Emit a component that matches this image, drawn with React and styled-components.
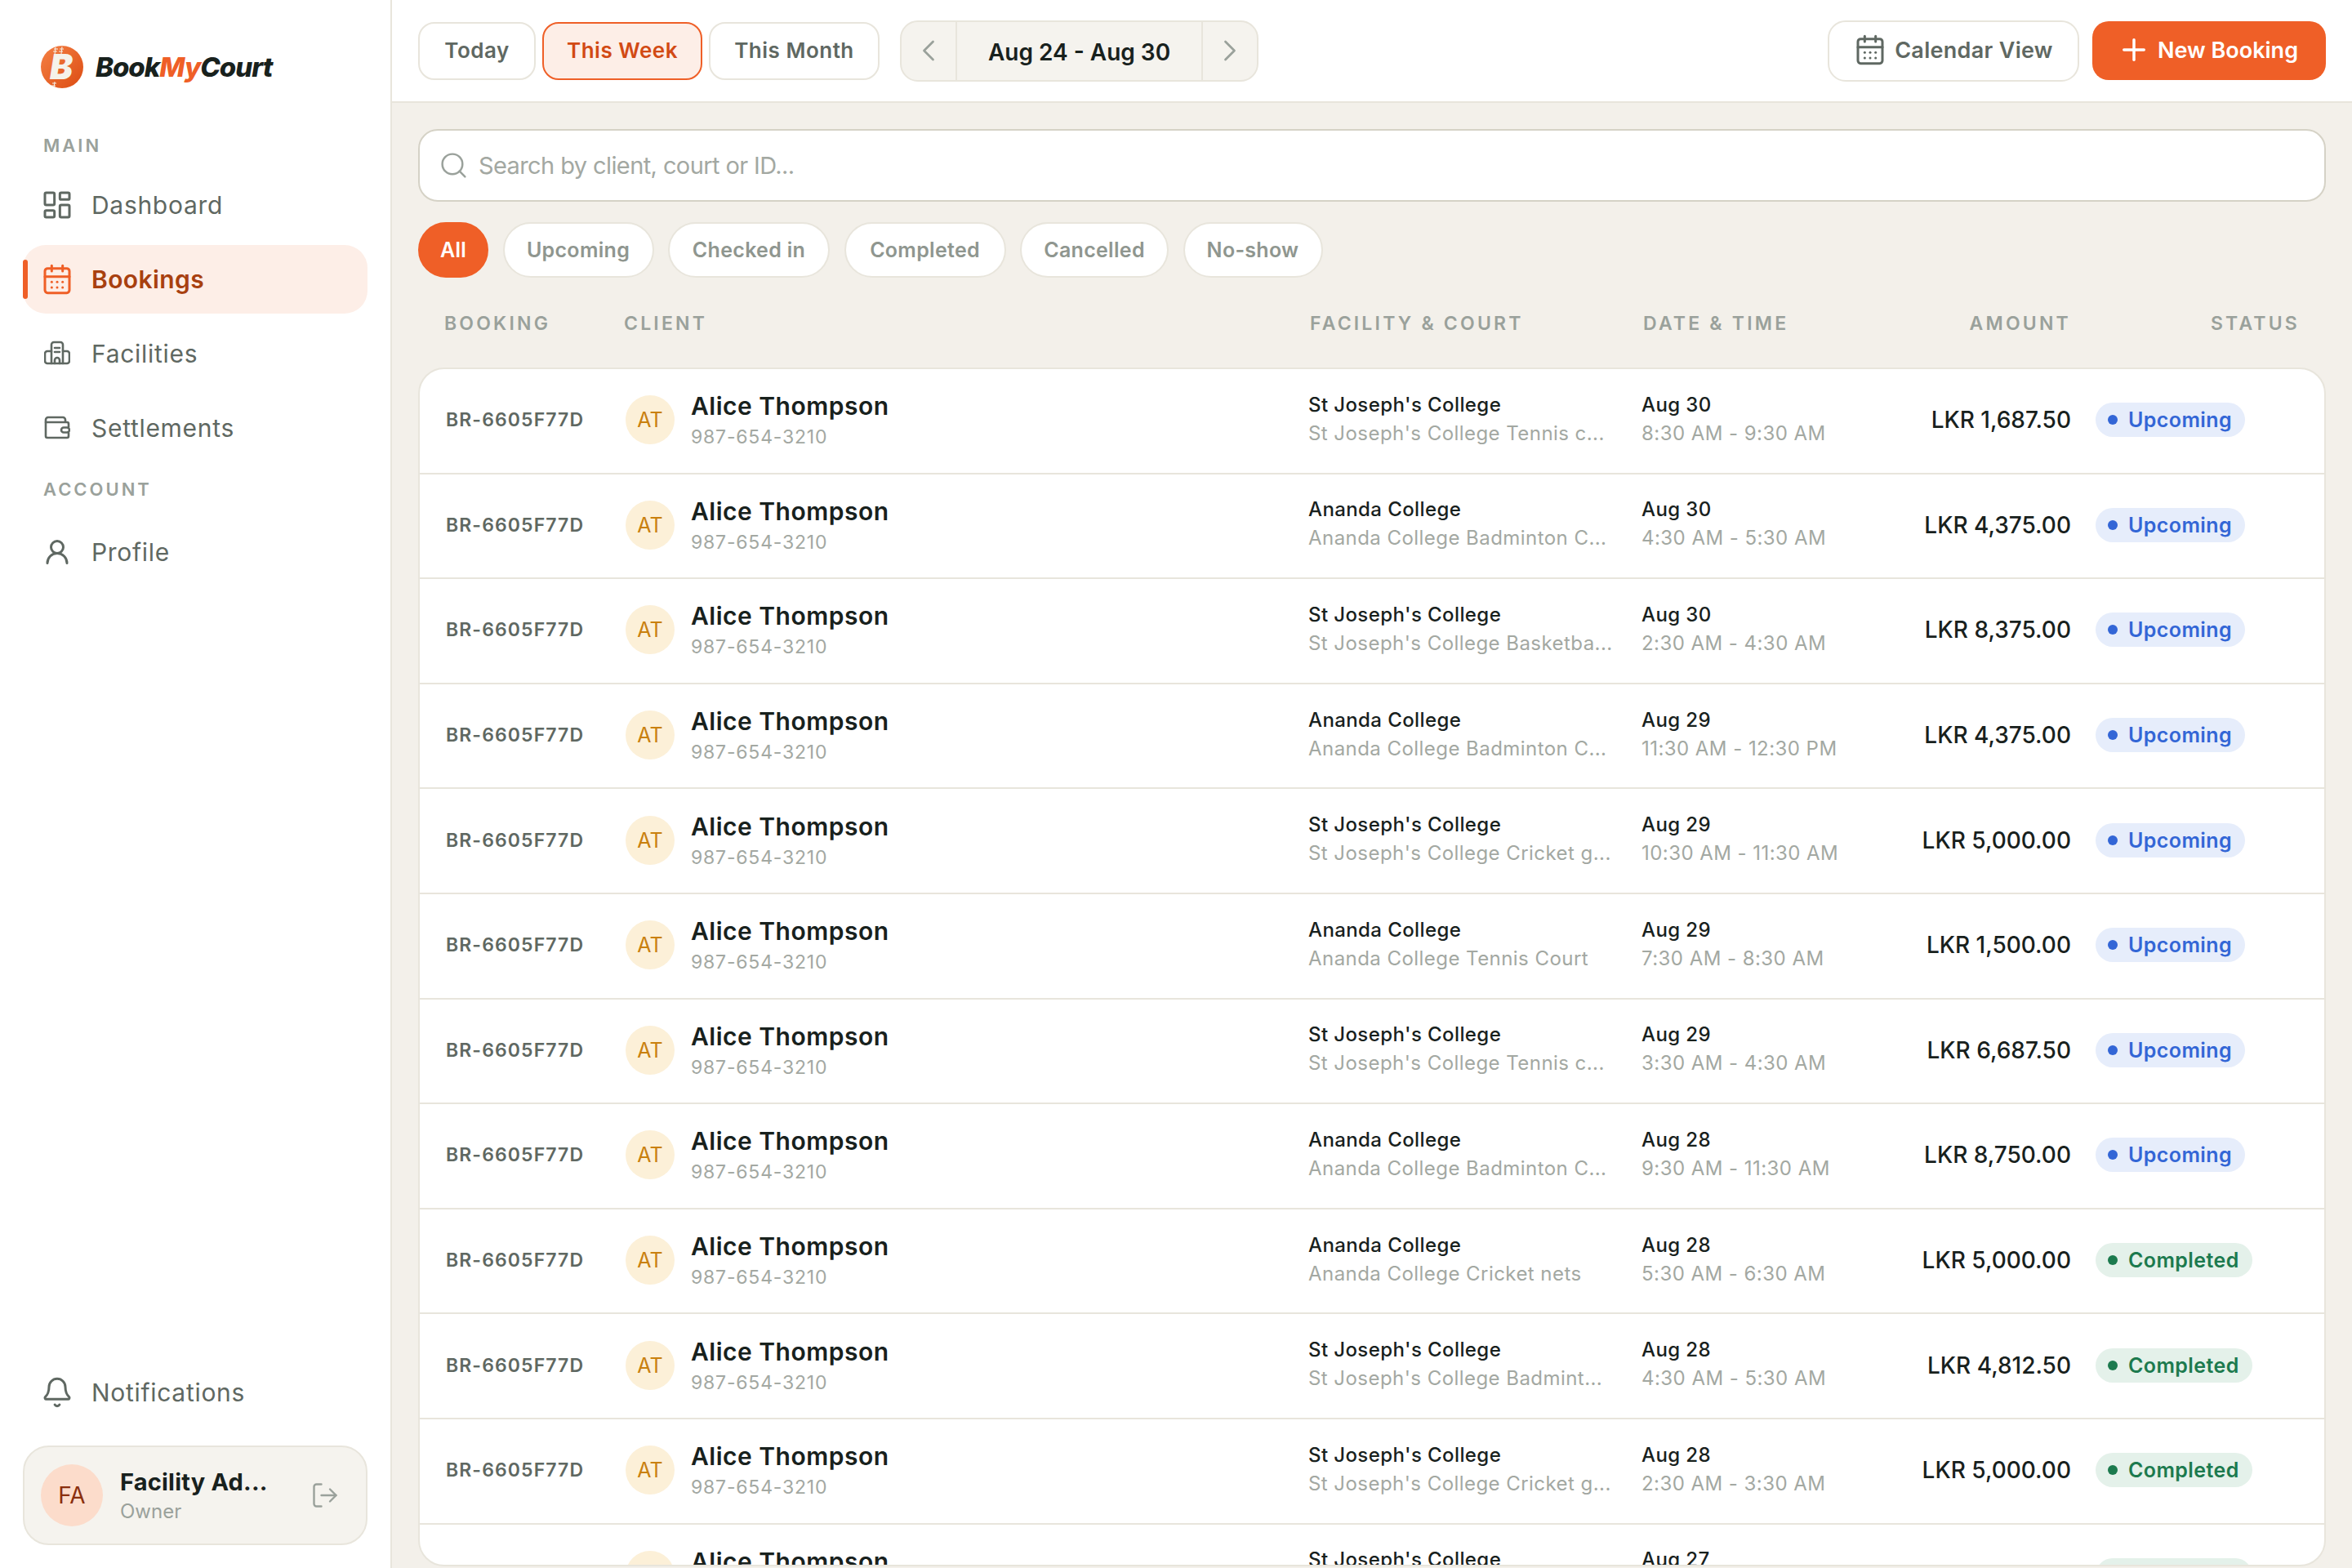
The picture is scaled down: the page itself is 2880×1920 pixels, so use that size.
import React from 'react';
import styled, { createGlobalStyle, css } from 'styled-components';
import {
  Bell,
  CalendarDays,
  ChevronLeft,
  ChevronRight,
  LayoutDashboard,
  LogOut,
  Plus,
  Search,
  UserRound,
} from 'lucide-react';

const GlobalStyle = createGlobalStyle`
  html, body, #root {
    margin: 0;
    height: 100%;
  }
  body {
    font-family: Inter, "Liberation Sans", sans-serif;
    background: #f3f0ea;
    color: #18211d;
  }
  * {
    box-sizing: border-box;
  }
`;

const Page = styled.div`
  display: flex;
  width: 2880px;
  height: 1920px;
  overflow: hidden;
`;

const Sidebar = styled.aside`
  display: flex;
  flex-direction: column;
  flex: 0 0 480px;
  padding: 56px 28px 28px;
  background: #fff;
  border-right: 2px solid #e8e5dc;
`;

const Logo = styled.div`
  display: flex;
  align-items: center;
  gap: 15px;
  height: 52px;
  padding-left: 22px;
`;

const LogoText = styled.div`
  font-size: 33px;
  font-weight: 800;
  font-style: italic;
  letter-spacing: -1px;
  color: #18211d;
  span {
    color: #ef5f27;
  }
`;

const SectionLabel = styled.div`
  margin: ${(props) => props.$top}px 0 ${(props) => props.$bottom}px 25px;
  font-size: 22px;
  line-height: 28px;
  font-weight: 600;
  letter-spacing: 3px;
  color: #9aa19b;
`;

const NavItem = styled.div`
  position: relative;
  display: flex;
  align-items: center;
  gap: 22px;
  height: 84px;
  margin-bottom: ${(props) => props.$gap ?? 7}px;
  padding-left: 22px;
  border-radius: 28px;
  font-size: 30px;
  letter-spacing: 0.7px;
  color: #5f6862;
  ${(props) =>
    props.$active &&
    css`
      background: #fdeee7;
      color: #a8400f;
      font-weight: 600;
      letter-spacing: 0.4px;
      svg {
        color: #ef5f27;
      }
      &::before {
        content: '';
        position: absolute;
        left: 0;
        top: 18px;
        width: 6px;
        height: 48px;
        border-radius: 3px;
        background: #ef5f27;
      }
    `}
`;

const IconSlot = styled.span`
  display: flex;
  align-items: center;
  justify-content: center;
  flex: 0 0 40px;
  height: 40px;
`;

const Spacer = styled.div`
  flex: 1;
`;

const UserCard = styled.div`
  display: flex;
  align-items: center;
  height: 122px;
  padding: 0 32px 0 20px;
  background: #f5f3ee;
  border: 2px solid #e8e5dc;
  border-radius: 32px;
`;

const UserAvatar = styled.div`
  display: flex;
  align-items: center;
  justify-content: center;
  flex: 0 0 76px;
  height: 76px;
  border-radius: 50%;
  background: #fcdccb;
  color: #8a2f0e;
  font-size: 28px;
`;

const UserInfo = styled.div`
  flex: 1;
  margin-left: 21px;
`;

const UserName = styled.div`
  font-size: 29px;
  line-height: 38px;
  font-weight: 700;
  letter-spacing: 0.2px;
  color: #18211d;
`;

const UserRole = styled.div`
  margin-top: 2px;
  font-size: 24px;
  line-height: 30px;
  color: #9aa19b;
`;

const Main = styled.main`
  display: flex;
  flex-direction: column;
  flex: 1;
  min-width: 0;
`;

const TopBar = styled.header`
  display: flex;
  align-items: center;
  flex: 0 0 126px;
  padding: 0 32px;
  background: #fff;
  border-bottom: 2px solid #e8e5dc;
`;

const RangeButtons = styled.div`
  display: flex;
  gap: 8px;
  margin-right: 25px;
`;

const RangeButton = styled.div`
  display: flex;
  align-items: center;
  justify-content: center;
  width: ${(props) => props.$width}px;
  height: 71px;
  padding-bottom: 2px;
  background: ${(props) => (props.$active ? '#fdeee7' : '#fff')};
  border: 2px solid ${(props) => (props.$active ? '#ef5f27' : '#e8e5dc')};
  border-radius: 20px;
  font-size: 26px;
  font-weight: 600;
  letter-spacing: 0.5px;
  color: ${(props) => (props.$active ? '#d24a14' : '#5f6862')};
`;

const DateNav = styled.div`
  display: flex;
  align-items: stretch;
  width: 439px;
  height: 75px;
  background: #f5f3ee;
  border: 2px solid #e8e5dc;
  border-radius: 22px;
`;

const DateArrow = styled.div`
  display: flex;
  align-items: center;
  justify-content: center;
  flex: 0 0 66px;
  color: #9aa19b;
`;

const DateLabel = styled.div`
  display: flex;
  align-items: center;
  justify-content: center;
  flex: 1;
  padding-top: 3px;
  border-left: 2px solid #e8e5dc;
  border-right: 2px solid #e8e5dc;
  font-size: 28px;
  font-weight: 600;
  color: #18211d;
`;

const Actions = styled.div`
  display: flex;
  align-items: center;
  gap: 16px;
  margin-left: auto;
`;

const ViewButton = styled.div`
  display: flex;
  align-items: center;
  justify-content: center;
  gap: 10px;
  width: 308px;
  height: 75px;
  padding-bottom: 2px;
  background: #fff;
  border: 2px solid #e8e5dc;
  border-radius: 22px;
  font-size: 27px;
  font-weight: 600;
  letter-spacing: 0.3px;
  color: #5f6862;
`;

const NewButton = styled.div`
  display: flex;
  align-items: center;
  justify-content: center;
  gap: 8px;
  width: 286px;
  height: 72px;
  padding: 0 4px 2px 0;
  background: #ef5f27;
  border-radius: 20px;
  font-size: 27px;
  font-weight: 600;
  color: #fff;
`;

const Content = styled.div`
  display: flex;
  flex-direction: column;
  flex: 1;
  min-height: 0;
  padding: 32px 32px 2px;
`;

const SearchBox = styled.label`
  display: flex;
  align-items: center;
  gap: 12px;
  flex: 0 0 89px;
  padding: 0 23px;
  background: #fff;
  border: 2px solid #d5d2c6;
  border-radius: 24px;
  color: #9aa19b;
`;

const SearchInput = styled.input`
  flex: 1;
  border: 0;
  outline: 0;
  background: none;
  padding: 0;
  font-family: inherit;
  font-size: 29px;
  letter-spacing: -0.6px;
  &::placeholder {
    color: #a3a8a2;
    opacity: 1;
  }
`;

const Chips = styled.div`
  display: flex;
  gap: 17.5px;
  margin-top: 25px;
`;

const Chip = styled.div`
  display: flex;
  align-items: center;
  justify-content: center;
  width: ${(props) => props.$width}px;
  height: 68px;
  background: ${(props) => (props.$active ? '#ef5f27' : '#fff')};
  border: 2px solid ${(props) => (props.$active ? '#ef5f27' : '#e8e5dc')};
  border-radius: 34px;
  font-size: 25px;
  font-weight: 600;
  letter-spacing: 0.3px;
  color: ${(props) => (props.$active ? '#fff' : '#8f968f')};
`;

const HeadRow = styled.div`
  display: grid;
  grid-template-columns: 220px 840px 408px 260px 264px 1fr;
  align-items: center;
  flex: 0 0 110px;
  padding: 2px 32px 0;
  font-size: 23px;
  font-weight: 600;
  letter-spacing: 3.2px;
  color: #9aa19b;
`;

const HeadEnd = styled.div`
  text-align: right;
`;

const Card = styled.div`
  flex: 1;
  min-height: 0;
  overflow: hidden;
  background: #fff;
  border: 2px solid #e8e5dc;
  border-radius: 32px;
`;

const Row = styled.div`
  display: grid;
  grid-template-columns: 220px 836px 408px 260px 266px 1fr;
  align-items: center;
  height: 128.6px;
  padding: 0 32px 2px;
  border-bottom: 2px solid #e8e5dc;
`;

const BookingId = styled.div`
  font-size: 23px;
  font-weight: 600;
  letter-spacing: 1.1px;
  color: #5f6862;
`;

const Client = styled.div`
  display: flex;
  align-items: center;
  gap: 20px;
`;

const ClientAvatar = styled.div`
  display: flex;
  align-items: center;
  justify-content: center;
  flex: 0 0 60px;
  height: 60px;
  border-radius: 50%;
  background: #fcf0d8;
  color: #c9800f;
  font-size: 25px;
`;

const ClientName = styled.div`
  font-size: 30px;
  line-height: 38px;
  font-weight: 600;
  letter-spacing: 0.5px;
  color: #18211d;
`;

const ClientPhone = styled.div`
  margin-top: 4px;
  font-size: 23px;
  line-height: 30px;
  letter-spacing: 0.8px;
  color: #a3a8a2;
`;

const Stack = styled.div`
  padding-bottom: 2px;
`;

const Title = styled.div`
  font-size: 24px;
  line-height: 32px;
  font-weight: 500;
  letter-spacing: 0.4px;
  color: #18211d;
`;

const Sub = styled.div`
  margin-top: 3px;
  font-size: 24px;
  line-height: 32px;
  letter-spacing: 0.45px;
  color: #a3a8a2;
`;

const Amount = styled.div`
  text-align: right;
  font-size: 28px;
  font-weight: 500;
  color: #18211d;
`;

const Badge = styled.div`
  display: inline-flex;
  align-items: center;
  gap: 13px;
  justify-self: start;
  height: 42px;
  margin-left: 30px;
  padding: 0 16px 0 15px;
  border-radius: 21px;
  background: ${(props) => (props.$done ? '#e4f1ea' : '#e6edfb')};
  color: ${(props) => (props.$done ? '#1c7a4e' : '#3366d6')};
  font-size: 25px;
  font-weight: 600;
  letter-spacing: 0.4px;
  &::before {
    content: '';
    width: 12px;
    height: 12px;
    border-radius: 50%;
    background: currentColor;
  }
`;

const BuildingIcon = () => (
  <svg width="32" height="32" viewBox="0 0 32 32" fill="none" stroke="currentColor" strokeWidth="2.6" strokeLinecap="round" strokeLinejoin="round">
    <path d="M9 28V5a3 3 0 0 1 3-3h8a3 3 0 0 1 3 3v23" />
    <path d="M9 13H4a3 3 0 0 0-3 3v9a3 3 0 0 0 3 3h24a3 3 0 0 0 3-3v-9a3 3 0 0 0-3-3h-5" />
    <path d="M13 9h6M13 14h6M13 28v-4a3 3 0 0 1 6 0v4" />
  </svg>
);

const WalletIcon = () => (
  <svg width="32" height="32" viewBox="0 0 32 32" fill="none" stroke="currentColor" strokeWidth="2.6" strokeLinecap="round" strokeLinejoin="round">
    <path d="M2 9v17a2 2 0 0 0 2 2h24a2 2 0 0 0 2-2v-4" />
    <path d="M30 15v-4a2 2 0 0 0-2-2H2V6a3 3 0 0 1 3-3h18a3 3 0 0 1 3 3v3" />
    <rect x="21" y="15.5" width="10" height="6" rx="3" />
  </svg>
);

const LogoMark = () => (
  <svg width="52" height="52" viewBox="0 0 52 52">
    <defs>
      <linearGradient id="ball" x1="0" y1="0" x2="1" y2="1">
        <stop offset="0" stopColor="#f58145" />
        <stop offset="1" stopColor="#dc4c12" />
      </linearGradient>
    </defs>
    <circle cx="26" cy="26" r="26" fill="url(#ball)" />
    <text x="25" y="41" textAnchor="middle" fontFamily="Inter, sans-serif" fontSize="42" fontWeight="900" fontStyle="italic" fill="#f5f2ea">B</text>
    <path d="M18 2l-1 9M26 1l-1 9M16 4h5M15 7h5M23 4h5M22 7h5M17 44l-1 7M14 46h5M13 49h5" stroke="#f5f2ea" strokeWidth="1" fill="none" />
  </svg>
);

const rows = [
  ["St Joseph's College", "St Joseph's College Tennis c...", 'Aug 30', '8:30 AM - 9:30 AM', 'LKR 1,687.50', 'Upcoming'],
  ['Ananda College', 'Ananda College Badminton C...', 'Aug 30', '4:30 AM - 5:30 AM', 'LKR 4,375.00', 'Upcoming'],
  ["St Joseph's College", "St Joseph's College Basketba...", 'Aug 30', '2:30 AM - 4:30 AM', 'LKR 8,375.00', 'Upcoming'],
  ['Ananda College', 'Ananda College Badminton C...', 'Aug 29', '11:30 AM - 12:30 PM', 'LKR 4,375.00', 'Upcoming'],
  ["St Joseph's College", "St Joseph's College Cricket g...", 'Aug 29', '10:30 AM - 11:30 AM', 'LKR 5,000.00', 'Upcoming'],
  ['Ananda College', 'Ananda College Tennis Court', 'Aug 29', '7:30 AM - 8:30 AM', 'LKR 1,500.00', 'Upcoming'],
  ["St Joseph's College", "St Joseph's College Tennis c...", 'Aug 29', '3:30 AM - 4:30 AM', 'LKR 6,687.50', 'Upcoming'],
  ['Ananda College', 'Ananda College Badminton C...', 'Aug 28', '9:30 AM - 11:30 AM', 'LKR 8,750.00', 'Upcoming'],
  ['Ananda College', 'Ananda College Cricket nets', 'Aug 28', '5:30 AM - 6:30 AM', 'LKR 5,000.00', 'Completed'],
  ["St Joseph's College", "St Joseph's College Badmint...", 'Aug 28', '4:30 AM - 5:30 AM', 'LKR 4,812.50', 'Completed'],
  ["St Joseph's College", "St Joseph's College Cricket g...", 'Aug 28', '2:30 AM - 3:30 AM', 'LKR 5,000.00', 'Completed'],
  ["St Joseph's College", "St Joseph's College Tennis c...", 'Aug 27', '1:30 AM - 2:30 AM', 'LKR 5,000.00', 'Completed'],
];

const chips = [
  ['All', 86],
  ['Upcoming', 185],
  ['Checked in', 198],
  ['Completed', 198],
  ['Cancelled', 182],
  ['No-show', 171],
];

const iconProps = { size: 40, strokeWidth: 1.8 };

const App = () => (
  <Page>
    <GlobalStyle />
    <Sidebar>
      <Logo>
        <LogoMark />
        <LogoText>
          Book<span>My</span>Court
        </LogoText>
      </Logo>
      <SectionLabel $top={56} $bottom={17}>MAIN</SectionLabel>
      <NavItem>
        <IconSlot>
          <LayoutDashboard {...iconProps} />
        </IconSlot>
        Dashboard
      </NavItem>
      <NavItem $active>
        <IconSlot>
          <CalendarDays {...iconProps} />
        </IconSlot>
        Bookings
      </NavItem>
      <NavItem>
        <IconSlot>
          <BuildingIcon />
        </IconSlot>
        Facilities
      </NavItem>
      <NavItem>
        <IconSlot>
          <WalletIcon />
        </IconSlot>
        Settlements
      </NavItem>
      <SectionLabel $top={12} $bottom={21}>ACCOUNT</SectionLabel>
      <NavItem>
        <IconSlot>
          <UserRound size={36} strokeWidth={2} />
        </IconSlot>
        Profile
      </NavItem>
      <Spacer />
      <NavItem $gap={23}>
        <IconSlot>
          <Bell {...iconProps} />
        </IconSlot>
        Notifications
      </NavItem>
      <UserCard>
        <UserAvatar>FA</UserAvatar>
        <UserInfo>
          <UserName>Facility Ad...</UserName>
          <UserRole>Owner</UserRole>
        </UserInfo>
        <LogOut size={36} strokeWidth={1.6} color="#9aa19b" />
      </UserCard>
    </Sidebar>
    <Main>
      <TopBar>
        <RangeButtons>
          <RangeButton $width={144}>Today</RangeButton>
          <RangeButton $width={196} $active>This Week</RangeButton>
          <RangeButton $width={209}>This Month</RangeButton>
        </RangeButtons>
        <DateNav>
          <DateArrow>
            <ChevronLeft size={44} strokeWidth={1.5} />
          </DateArrow>
          <DateLabel>Aug 24 - Aug 30</DateLabel>
          <DateArrow>
            <ChevronRight size={44} strokeWidth={1.5} />
          </DateArrow>
        </DateNav>
        <Actions>
          <ViewButton>
            <CalendarDays {...iconProps} />
            Calendar View
          </ViewButton>
          <NewButton>
            <Plus size={42} strokeWidth={2} />
            New Booking
          </NewButton>
        </Actions>
      </TopBar>
      <Content>
        <SearchBox>
          <Search size={37} strokeWidth={1.6} />
          <SearchInput placeholder="Search by client, court or ID..." />
        </SearchBox>
        <Chips>
          {chips.map(([label, width], i) => (
            <Chip key={label} $width={width} $active={i === 0}>
              {label}
            </Chip>
          ))}
        </Chips>
        <HeadRow>
          <div>BOOKING</div>
          <div>CLIENT</div>
          <div>FACILITY &amp; COURT</div>
          <div>DATE &amp; TIME</div>
          <HeadEnd>AMOUNT</HeadEnd>
          <HeadEnd>STATUS</HeadEnd>
        </HeadRow>
        <Card>
          {rows.map((row, i) => (
            <Row key={i}>
              <BookingId>BR-6605F77D</BookingId>
              <Client>
                <ClientAvatar>AT</ClientAvatar>
                <div>
                  <ClientName>Alice Thompson</ClientName>
                  <ClientPhone>987-654-3210</ClientPhone>
                </div>
              </Client>
              <Stack>
                <Title>{row[0]}</Title>
                <Sub>{row[1]}</Sub>
              </Stack>
              <Stack>
                <Title>{row[2]}</Title>
                <Sub>{row[3]}</Sub>
              </Stack>
              <Amount>{row[4]}</Amount>
              <Badge $done={row[5] === 'Completed'}>{row[5]}</Badge>
            </Row>
          ))}
        </Card>
      </Content>
    </Main>
  </Page>
);

export default App;
